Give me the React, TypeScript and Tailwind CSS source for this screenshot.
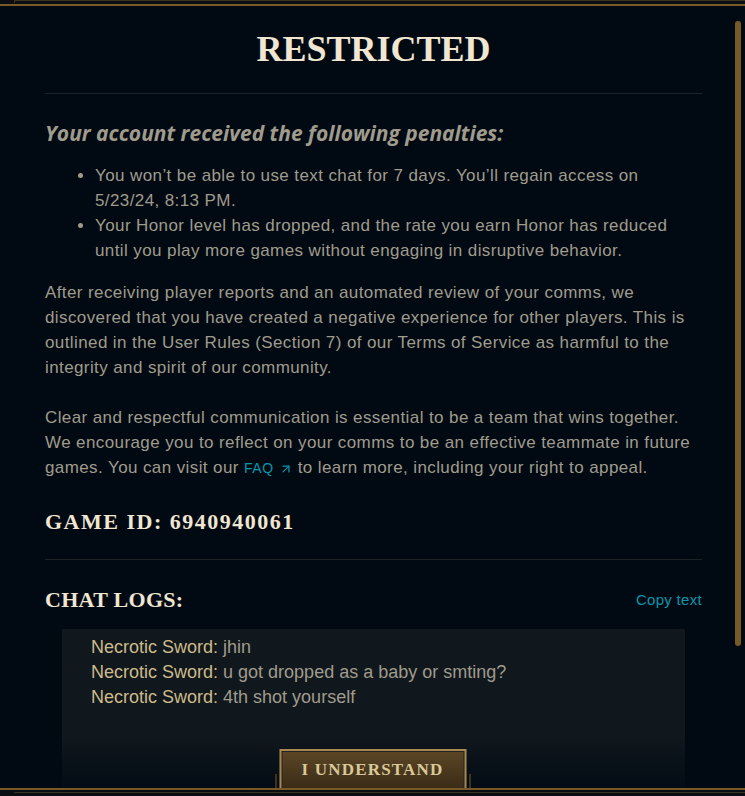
import { ArrowUpRight } from "lucide-react"

const serif = { fontFamily: '"Liberation Serif", "DejaVu Serif", serif' }
const sans = { fontFamily: '"Liberation Sans", Arial, sans-serif' }
const italicHead = { fontFamily: '"Open Sans", "Noto Sans", sans-serif' }

const chatLines = [
  { name: "Necrotic Sword:", text: "jhin" },
  { name: "Necrotic Sword:", text: "u got dropped as a baby or smting?" },
  { name: "Necrotic Sword:", text: "4th shot yourself" },
]

export default function App() {
  return (
    <div className="relative h-[796px] w-[745px] overflow-hidden bg-[#010a13]" style={sans}>
      {/* top frame */}
      <div className="absolute inset-x-0 top-0 z-20 h-[6px] border-b-2 border-[#785a28] bg-[#0a0e12]">
        <div className="ml-[14px] h-[3px] border-t border-l border-[#3c3220]" />
      </div>

      {/* scrollbar */}
      <div className="absolute right-[4px] top-[21px] z-20 h-[625px] w-[6px] rounded-full bg-[#785a28]" />

      {/* scrolling content */}
      <div className="flex flex-col pl-[45px] pr-[43px] pt-[29px]">
        <h1
          className="text-center text-[36px] font-bold leading-[40px] text-[#f0e6d2]"
          style={serif}
        >
          RESTRICTED
        </h1>
        <div className="mt-[24px] h-px bg-[#1e2328]" />

        <h2
          className="mt-[25px] text-[21px] font-bold italic leading-[28px] text-[#a09b8c]"
          style={italicHead}
        >
          Your account received the following penalties:
        </h2>

        <ul className="mt-[16px] list-disc whitespace-nowrap pl-[50px] text-[17px] leading-[25px] tracking-[0.4px] text-[#a09b8c]">
          <li>
            You won’t be able to use text chat for 7 days. You’ll regain access on
            <br />
            5/23/24, 8:13 PM.
          </li>
          <li>
            Your Honor level has dropped, and the rate you earn Honor has reduced
            <br />
            until you play more games without engaging in disruptive behavior.
          </li>
        </ul>

        <p className="mt-[17px] whitespace-nowrap text-[17px] leading-[25px] tracking-[0.4px] text-[#a09b8c]">
          After receiving player reports and an automated review of your comms, we
          <br />
          discovered that you have created a negative experience for other players. This is
          <br />
          outlined in the User Rules (Section 7) of our Terms of Service as harmful to the
          <br />
          integrity and spirit of our community.
        </p>
        <p className="mt-[25px] whitespace-nowrap text-[17px] leading-[25px] tracking-[0.4px] text-[#a09b8c]">
          Clear and respectful communication is essential to be a team that wins together.
          <br />
          We encourage you to reflect on your comms to be an effective teammate in future
          <br />
          games. You can visit our{" "}
          <span className="inline-flex items-center gap-[5px] text-[14px] tracking-[0.5px] text-[#0a96aa]">
            FAQ
            <ArrowUpRight className="h-[14px] w-[14px]" strokeWidth={2.2} />
          </span>{" "}
          to learn more, including your right to appeal.
        </p>

        <div
          className="mt-[27px] text-[22px] font-bold leading-[28px] tracking-[1.5px] text-[#f0e6d2]"
          style={serif}
        >
          GAME ID: 6940940061
        </div>
        <div className="mt-[23px] h-px bg-[#1e2328]" />

        <div className="mt-[26px] flex items-center justify-between">
          <div
            className="text-[22px] font-bold leading-[28px] tracking-[0.3px] text-[#f0e6d2]"
            style={serif}
          >
            CHAT LOGS:
          </div>
          <button className="text-[15px] tracking-[0.3px] text-[#0a96aa]">Copy text</button>
        </div>

        <div className="mx-[17px] mt-[15px] h-[180px] bg-[#10171d] pl-[29px] pt-[6px]">
          {chatLines.map((line, i) => (
            <div key={i} className="text-[18px] leading-[25px]">
              <span className="text-[#cdbb8a]">{line.name}</span>{" "}
              <span className="text-[#a09b8c]">{line.text}</span>
            </div>
          ))}
        </div>
      </div>

      {/* footer */}
      <div className="absolute inset-x-0 bottom-0 z-10 h-[60px] bg-gradient-to-b from-transparent to-[#010a13]">
        <div className="absolute bottom-[6px] left-1/2 flex -translate-x-1/2 items-end">
          <div className="h-[16px] w-px bg-[#785a28]" />
          <div className="mx-[3px] mb-[-1px] border-2 border-[#a8874f] bg-[#1e2328] p-[1px]">
            <div
              className="flex h-[36px] w-[181px] items-center justify-center bg-gradient-to-b from-[#5b4525] to-[#3b2c17] text-[17px] font-bold tracking-[1.2px] text-[#d8c89a]"
              style={serif}
            >
              I UNDERSTAND
            </div>
          </div>
          <div className="h-[16px] w-px bg-[#785a28]" />
        </div>
        <div className="absolute inset-x-0 bottom-0 h-[8px] border-t-2 border-[#785a28] bg-[#0a0e12]">
          <div className="ml-[14px] mt-[1px] h-[2px] border-b border-[#3c3220]" />
        </div>
      </div>
    </div>
  )
}
